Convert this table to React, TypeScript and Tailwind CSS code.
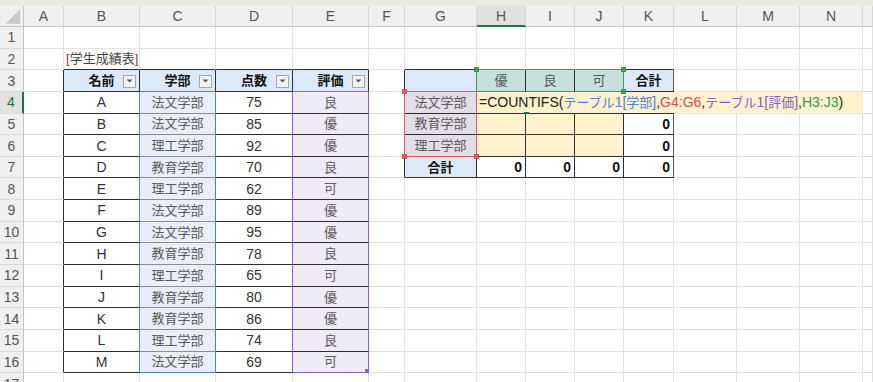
import React from 'react';

const GRID =
  'grid grid-cols-[24px_40px_76px_76px_77px_76px_36px_72px_49px_49px_49px_50px_63px_63px_63px_1fr]';

const LETTERS = ['A', 'B', 'C', 'D', 'E', 'F', 'G', 'H', 'I', 'J', 'K', 'L', 'M', 'N', ''];

const STUDENTS: [string, string, number, string][] = [
  ['A', '法文学部', 75, '良'],
  ['B', '法文学部', 85, '優'],
  ['C', '理工学部', 92, '優'],
  ['D', '教育学部', 70, '良'],
  ['E', '理工学部', 62, '可'],
  ['F', '法文学部', 89, '優'],
  ['G', '法文学部', 95, '優'],
  ['H', '教育学部', 78, '良'],
  ['I', '理工学部', 65, '可'],
  ['J', '教育学部', 80, '優'],
  ['K', '教育学部', 86, '優'],
  ['L', '理工学部', 74, '良'],
  ['M', '法文学部', 69, '可'],
];

const DEPTS = ['法文学部', '教育学部', '理工学部'];

// border colours per side
const RC: Record<string, string> = {
  g: 'border-r-[#e2e2e2]',
  k: 'border-r-[#2f2f2f]',
  b: 'border-r-[#4f7fd4]',
  p: 'border-r-[#8c5fc6]',
  r: 'border-r-[#d65a63]',
  n: 'border-r-[#3c9a5a]',
  s: 'border-r-[#5a5a5a]',
};
const BC: Record<string, string> = {
  g: 'border-b-[#e2e2e2]',
  k: 'border-b-[#2f2f2f]',
  b: 'border-b-[#4f7fd4]',
  p: 'border-b-[#8c5fc6]',
  r: 'border-b-[#d65a63]',
  n: 'border-b-[#3c9a5a]',
  m: 'border-b-[#8d8d8d]',
};

const HEAD_BLUE = 'bg-[#dde9f6]';

const J = ({ children }: { children: React.ReactNode }) => <span className="text-[13px]">{children}</span>;

const Dropdown = () => (
  <span className="absolute right-[3px] bottom-[3px] w-[13px] h-[13px] border border-[#a9a9a9] bg-[#f3f3f3] flex items-center justify-center">
    <svg width="7" height="4" viewBox="0 0 7 4">
      <polygon points="0.5,0.5 6.5,0.5 3.5,3.5" fill="#595959" />
    </svg>
  </span>
);

// little handles at the corners of the formula's range boxes
const Mark = ({ pos, color }: { pos: string; color: string }) => (
  <span className={`absolute w-[5px] h-[5px] z-10 ${pos} ${color}`} />
);

function marks(row: number, col: number) {
  const out: React.ReactNode[] = [];
  const green = 'bg-[#3c9a5a]';
  const red = 'bg-[#d65a63]';
  if (row === 3 && col === 8) out.push(<Mark key="g1" pos="-top-[3px] -left-[3px]" color={green} />);
  if (row === 3 && col === 10) {
    out.push(<Mark key="g2" pos="-top-[3px] -right-[3px]" color={green} />);
    out.push(<Mark key="g3" pos="-bottom-[3px] -right-[3px]" color={green} />);
  }
  if (row === 4 && col === 7) out.push(<Mark key="r1" pos="-top-[3px] -left-[3px]" color={red} />);
  if (row === 6 && col === 7) {
    out.push(<Mark key="r2" pos="-bottom-[3px] -left-[3px]" color={red} />);
    out.push(<Mark key="r3" pos="-bottom-[3px] -right-[3px]" color={red} />);
  }
  if (row === 16 && col === 5)
    out.push(<span key="h" className="absolute right-0 bottom-0 w-[3px] h-[3px] bg-[#8c5fc6]" />);
  return out;
}

function rightKey(row: number, col: number) {
  if (row >= 3 && row <= 16) {
    if (col === 1) return 'k';
    if (col === 2 || col === 3) return row === 3 ? 'k' : 'b';
    if (col === 4 || col === 5) return row === 3 ? 'k' : 'p';
  }
  if (row >= 3 && row <= 7) {
    if (col === 6) return row >= 4 && row <= 6 ? 'r' : 'k';
    if (col === 7) return row === 3 ? 'n' : row === 7 ? 'k' : 'r';
    if (col === 8 || col === 9) return 'k';
    if (col === 10) return row === 3 ? 'n' : 'k';
    if (col === 11) return 's';
  }
  return 'g';
}

function bottomKey(row: number, col: number) {
  if (row === 2) {
    if (col >= 2 && col <= 5) return 'k';
    if (col === 7 || col === 11) return 'k';
    if (col >= 8 && col <= 10) return 'n';
  }
  if (row >= 3 && row <= 16) {
    if (col === 2 || col === 4) return 'k';
    if (col === 3) return row === 3 || row === 16 ? 'b' : 'm';
    if (col === 5) return row === 3 || row === 16 ? 'p' : 'k';
  }
  if (row >= 3 && row <= 7) {
    if (col === 7) return row === 3 || row === 6 ? 'r' : 'k';
    if (col >= 8 && col <= 10) return row === 3 ? 'n' : 'k';
    if (col === 11) return 'k';
  }
  return 'g';
}

function background(row: number, col: number) {
  if (row === 3 && [2, 3, 4, 5, 7, 11].includes(col)) return HEAD_BLUE;
  if (row === 3 && col >= 8 && col <= 10) return 'bg-[#c8e0db]';
  if (row >= 4 && row <= 16 && col === 3) return 'bg-[#e9eef8]';
  if (row >= 4 && row <= 16 && col === 5) return 'bg-[#efebf7]';
  if (row >= 4 && row <= 6 && col === 7) return 'bg-[#e3dde7]';
  if (row === 7 && col === 7) return HEAD_BLUE;
  if ((row === 5 || row === 6) && col >= 8 && col <= 10) return 'bg-[#fff2cc]';
  return 'bg-white';
}

function content(row: number, col: number): { node: React.ReactNode; cls: string } {
  const center = 'justify-center';
  const right = 'justify-end pr-[3px]';
  if (row === 2 && col === 2)
    return {
      node: (
        <span className="text-[13px] text-[#444] pl-[2px]">
          <span className="text-[#8e3a3a]">[</span>学生成績表<span className="text-[#8e3a3a]">]</span>
        </span>
      ),
      cls: 'overflow-visible',
    };
  if (row === 3) {
    const heads: Record<number, string> = { 2: '名前', 3: '学部', 4: '点数', 5: '評価' };
    if (heads[col])
      return {
        node: (
          <>
            <span className="text-[13px] font-bold text-[#111]">{heads[col]}</span>
            <Dropdown />
          </>
        ),
        cls: center,
      };
    const grades: Record<number, string> = { 8: '優', 9: '良', 10: '可' };
    if (grades[col]) return { node: <span className="text-[13px] text-[#555]">{grades[col]}</span>, cls: center };
    if (col === 11) return { node: <span className="text-[13px] font-bold text-[#111]">合計</span>, cls: center };
  }
  if (row >= 4 && row <= 16) {
    const s = STUDENTS[row - 4];
    if (col === 2) return { node: <span className="text-[#333]">{s[0]}</span>, cls: center };
    if (col === 3) return { node: <span className="text-[13px] text-[#5a5a5a]">{s[1]}</span>, cls: center };
    if (col === 4) return { node: <span className="text-[#333]">{s[2]}</span>, cls: center };
    if (col === 5) return { node: <span className="text-[13px] text-[#5a5a5a]">{s[3]}</span>, cls: center };
  }
  if (row >= 4 && row <= 6 && col === 7)
    return { node: <span className="text-[13px] text-[#5a5a5a]">{DEPTS[row - 4]}</span>, cls: center };
  if (row === 7 && col === 7) return { node: <span className="text-[13px] font-bold text-[#111]">合計</span>, cls: center };
  if (((row === 5 || row === 6) && col === 11) || (row === 7 && col >= 8 && col <= 11))
    return { node: <span className="font-bold text-[#111]">0</span>, cls: right };
  return { node: null, cls: '' };
}

const Formula = () => (
  <span className="pl-[2px] text-[14px] whitespace-nowrap">
    <span className="text-[#222]">=COUNTIFS(</span>
    <span className="text-[#4f7fd4]">
      <J>テーブル</J>1[<J>学部</J>]
    </span>
    <span className="text-[#222]">,</span>
    <span className="text-[#d64a52]">G4:G6</span>
    <span className="text-[#222]">,</span>
    <span className="text-[#8c5fc6]">
      <J>テーブル</J>1[<J>評価</J>]
    </span>
    <span className="text-[#222]">,</span>
    <span className="text-[#2f9a4e]">H3:J3</span>
    <span className="text-[#222]">)</span>
  </span>
);

const RowHeader = ({ n }: { n: number }) => (
  <div
    className={`flex items-center justify-center border-b border-b-[#dadada] text-[14px] ${
      n === 4
        ? 'bg-[#e1e1e1] text-[#217346] border-r-2 border-r-[#217346]'
        : 'bg-[#f0f0f0] text-[#555] border-r border-r-[#c4c4c4]'
    }`}
  >
    {n}
  </div>
);

const Cell = ({ row, col }: { row: number; col: number }) => {
  const c = content(row, col);
  return (
    <div
      className={`relative flex items-center whitespace-nowrap border-r border-b ${RC[rightKey(row, col)]} ${
        BC[bottomKey(row, col)]
      } ${background(row, col)} ${c.cls}`}
    >
      {c.node}
      {marks(row, col)}
    </div>
  );
};

const Row = ({ row }: { row: number }) => {
  if (row === 4) {
    return (
      <div className={`${GRID} h-[21.65px]`}>
        <RowHeader n={4} />
        {[1, 2, 3, 4, 5, 6, 7].map(c => (
          <Cell key={c} row={4} col={c} />
        ))}
        {/* formula being edited in H4 spills across to N */}
        <div className="relative col-span-7 flex flex-col">
          <div className="flex-1 flex items-center bg-[#fff2cc] overflow-visible">
            <Formula />
          </div>
          <div className="flex h-px">
            <div className="w-[197px] bg-[#2f2f2f]" />
            <div className="flex-1 bg-[#e2e2e2]" />
          </div>
          <span className="absolute left-[47px] -bottom-[3px] w-[5px] h-[5px] bg-[#217346]" />
        </div>
        <Cell row={4} col={15} />
      </div>
    );
  }
  return (
    <div className={`${GRID} h-[21.65px]`}>
      <RowHeader n={row} />
      {Array.from({ length: 15 }, (_, i) => (
        <Cell key={i} row={row} col={i + 1} />
      ))}
    </div>
  );
};

export default function App() {
  return (
    <div className="w-[873px] h-[382px] overflow-hidden bg-white font-['Liberation_Sans','Noto_Sans_CJK_JP',sans-serif] text-[14px] leading-none">
      <div className="h-[6px] bg-[#e9ebe1]" />
      {/* column headers */}
      <div className={`${GRID} h-[21px]`}>
        <div className="bg-[#f0f0f0] border-r border-r-[#c4c4c4] border-b border-b-[#c4c4c4] flex">
          <svg width="24" height="20" viewBox="0 0 24 20">
            <polygon points="21,3 21,18 6,18" fill="#c9c9c9" />
          </svg>
        </div>
        {LETTERS.map((l, i) => (
          <div
            key={i}
            className={`flex items-center justify-center border-r border-r-[#d6d6d6] text-[#555] text-[14px] ${
              l === 'H'
                ? 'bg-[#e1e1e1] border-b-2 border-b-[#217346]'
                : 'bg-[#f0f0f0] border-b border-b-[#c4c4c4]'
            }`}
          >
            {l}
          </div>
        ))}
      </div>
      {Array.from({ length: 17 }, (_, i) => (
        <Row key={i} row={i + 1} />
      ))}
    </div>
  );
}
